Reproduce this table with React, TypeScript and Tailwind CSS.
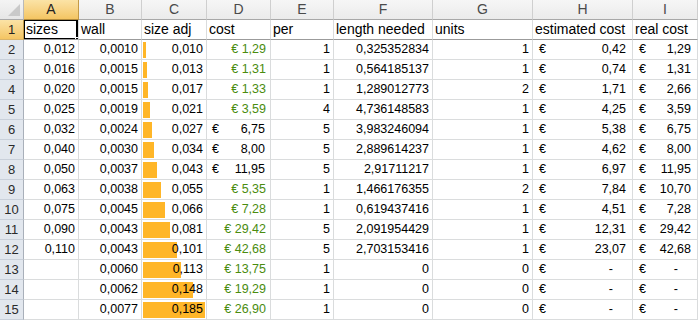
import React from "react";

type Row = {
  n: number;
  a: string;
  b: string;
  c: number;
  d: string;
  dAcct?: boolean;
  e: number;
  f: string;
  g: number;
  h: string;
  i: string;
};

const rows: Row[] = [
  { n: 2, a: "0,012", b: "0,0010", c: 0.01, d: "1,29", e: 1, f: "0,325352834", g: 1, h: "0,42", i: "1,29" },
  { n: 3, a: "0,016", b: "0,0015", c: 0.013, d: "1,31", e: 1, f: "0,564185137", g: 1, h: "0,74", i: "1,31" },
  { n: 4, a: "0,020", b: "0,0015", c: 0.017, d: "1,33", e: 1, f: "1,289012773", g: 2, h: "1,71", i: "2,66" },
  { n: 5, a: "0,025", b: "0,0019", c: 0.021, d: "3,59", e: 4, f: "4,736148583", g: 1, h: "4,25", i: "3,59" },
  { n: 6, a: "0,032", b: "0,0024", c: 0.027, d: "6,75", dAcct: true, e: 5, f: "3,983246094", g: 1, h: "5,38", i: "6,75" },
  { n: 7, a: "0,040", b: "0,0030", c: 0.034, d: "8,00", dAcct: true, e: 5, f: "2,889614237", g: 1, h: "4,62", i: "8,00" },
  { n: 8, a: "0,050", b: "0,0037", c: 0.043, d: "11,95", dAcct: true, e: 5, f: "2,91711217", g: 1, h: "6,97", i: "11,95" },
  { n: 9, a: "0,063", b: "0,0038", c: 0.055, d: "5,35", e: 1, f: "1,466176355", g: 2, h: "7,84", i: "10,70" },
  { n: 10, a: "0,075", b: "0,0045", c: 0.066, d: "7,28", e: 1, f: "0,619437416", g: 1, h: "4,51", i: "7,28" },
  { n: 11, a: "0,090", b: "0,0043", c: 0.081, d: "29,42", e: 5, f: "2,091954429", g: 1, h: "12,31", i: "29,42" },
  { n: 12, a: "0,110", b: "0,0043", c: 0.101, d: "42,68", e: 5, f: "2,703153416", g: 1, h: "23,07", i: "42,68" },
  { n: 13, a: "", b: "0,0060", c: 0.113, d: "13,75", e: 1, f: "0", g: 0, h: "-", i: "-" },
  { n: 14, a: "", b: "0,0062", c: 0.148, d: "19,29", e: 1, f: "0", g: 0, h: "-", i: "-" },
  { n: 15, a: "", b: "0,0077", c: 0.185, d: "26,90", e: 1, f: "0", g: 0, h: "-", i: "-" },
];

const letters = ["A", "B", "C", "D", "E", "F", "G", "H", "I"];
const titles = ["sizes", "wall", "size adj", "cost", "per", "length needed", "units", "estimated cost", "real cost"];

const grid = "grid grid-cols-[24px_55px_63px_65px_64px_63px_99px_100px_100px_65px]";
const cell = "h-[20px] border-r border-b border-[#dadcdd] flex items-center overflow-hidden whitespace-nowrap";
const num = `${cell} justify-end pr-[3px] text-[12.5px] text-black`;
const green = `${cell} justify-end pr-[4px] text-[12.5px] text-[#4a8c0e]`;

function Acct({ v }: { v: string }) {
  const dash = v === "-";
  return (
    <div className={`${cell} justify-between pl-[6px] text-[12.5px] text-black ${dash ? "pr-[19px]" : "pr-[6px]"}`}>
      <span>€</span>
      <span>{v}</span>
    </div>
  );
}

function RowHead({ n, active }: { n: number; active?: boolean }) {
  return (
    <div
      className={`h-[20px] flex items-center justify-center border-r border-b text-[13px] ${
        active
          ? "bg-gradient-to-b from-[#fbe3a6] to-[#f4c562] border-r-[#c49a46] border-b-[#d9b46a] text-[#222]"
          : "bg-[#e2e7ee] border-r-[#a9b0ba] border-b-[#c9d0da] text-[#2a2a2a]"
      }`}
    >
      {n}
    </div>
  );
}

export default function App() {
  return (
    <div className="w-[698px] h-[321px] overflow-hidden bg-white font-['Liberation_Sans',Arial,sans-serif]">
      {/* cabeçalho de colunas */}
      <div className={grid}>
        <div className="h-[20px] bg-gradient-to-b from-[#f4f4f4] to-[#e6e6e6] border-r border-b border-r-[#b9b9b9] border-b-[#a8a8a8] flex items-end justify-end p-[3px]">
          <svg width="12" height="12" viewBox="0 0 12 12">
            <polygon points="12,0 12,12 0,12" fill="#c9c9c9" />
          </svg>
        </div>
        {letters.map((l) => (
          <div
            key={l}
            className={`h-[20px] flex items-center justify-center border-r border-b text-[14px] ${
              l === "A"
                ? "bg-gradient-to-b from-[#fbe3a6] to-[#f4c562] border-r-[#c49a46] border-b-[#b08a3c] text-[#222]"
                : "bg-gradient-to-b from-[#f6f6f6] to-[#ebebeb] border-r-[#cfcfcf] border-b-[#a8a8a8] text-[#4a4a4a]"
            }`}
          >
            {l}
          </div>
        ))}
      </div>

      {/* linha 1 com os títulos */}
      <div className={grid}>
        <RowHead n={1} active />
        {titles.map((t, idx) => (
          <div key={t} className={`${cell} relative border-b-[#9b9b9b] pl-[2px] text-[14px] text-black`}>
            {t}
            {idx === 0 && (
              <>
                <div className="absolute -left-px -top-px right-0 bottom-[-1px] border-2 border-black" />
                <div className="absolute right-[-3px] bottom-[-4px] w-[6px] h-[6px] bg-black border border-white" />
              </>
            )}
          </div>
        ))}
      </div>

      {rows.map((r) => {
        const bar = Math.round(3 + ((r.c - 0.01) / 0.175) * 59);
        return (
          <div key={r.n} className={grid}>
            <RowHead n={r.n} />
            <div className={num}>{r.a}</div>
            <div className={num}>{r.b}</div>
            <div className={`${num} relative`}>
              <div className="absolute left-px top-[2px] h-[16px] bg-[#ffb628]" style={{ width: bar }} />
              <span className="relative">{r.c.toFixed(3).replace(".", ",")}</span>
            </div>
            {r.dAcct ? (
              <div className={`${cell} justify-between pl-[5px] pr-[5px] text-[12.5px] text-black`}>
                <span>€</span>
                <span>{r.d}</span>
              </div>
            ) : (
              <div className={green}>€ {r.d}</div>
            )}
            <div className={num}>{r.e}</div>
            <div className={num}>{r.f}</div>
            <div className={num}>{r.g}</div>
            <Acct v={r.h} />
            <Acct v={r.i} />
          </div>
        );
      })}
    </div>
  );
}
